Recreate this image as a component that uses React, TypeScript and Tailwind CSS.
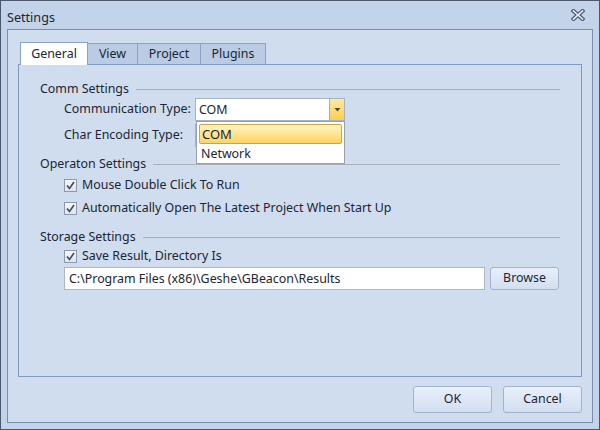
import React from "react";

const font = { fontFamily: '"Noto Sans", "Open Sans", sans-serif' };

function CloseGlyph() {
  return (
    <svg width="14" height="12" viewBox="0 0 14 12">
      <path d="M2.5 2 L11.5 10 M11.5 2 L2.5 10" stroke="#4f5b6e" strokeWidth="4" strokeLinecap="square" />
      <path d="M2.5 2 L11.5 10 M11.5 2 L2.5 10" stroke="#e9eef6" strokeWidth="1.6" strokeLinecap="square" />
    </svg>
  );
}

function Check() {
  return (
    <span className="w-[13px] h-[13px] border border-[#8e9aac] bg-gradient-to-b from-[#f4f6f9] to-[#dfe4ea] flex items-center justify-center shrink-0">
      <svg width="9" height="9" viewBox="0 0 9 9">
        <path d="M1 4.5 L3.5 7.5 L8 1" fill="none" stroke="#3b4a5e" strokeWidth="1.6" />
      </svg>
    </span>
  );
}

function GroupHeader({ title, className }: { title: string; className?: string }) {
  return (
    <div className={`flex items-center h-[18px] ${className ?? ""}`}>
      <span className="whitespace-nowrap">{title}</span>
      <span className="flex-1 h-px bg-[#a9afb8] ml-[7px]" />
    </div>
  );
}

function Combo({ value, open }: { value: string; open?: boolean }) {
  return (
    <div className="relative w-[150px] h-[23px] bg-white border border-[#a6b3c4] flex shrink-0">
      <span className="flex-1 pl-[3px] leading-[21px]">{value}</span>
      <span className="w-[15px] h-full bg-gradient-to-b from-[#ffe9a0] to-[#ffcf4a] border-l border-[#e0a634] flex items-center justify-center">
        <svg width="7" height="4" viewBox="0 0 7 4">
          <path d="M0.5 0 L6.5 0 L3.5 3.5 Z" fill="#4a4a4a" />
        </svg>
      </span>
      {open && (
        <div className="absolute left-0 top-[22px] w-[149px] h-[43px] bg-white border border-[#9aa0a8] z-10 p-px">
          <div className="h-[20px] mx-px mt-px rounded-[2px] border border-[#c9a24a] bg-gradient-to-b from-[#fff3c0] to-[#ffd55e] pl-[2px] leading-[18px] text-[13px]">
            COM
          </div>
          <div className="pl-[3px] leading-[20px]">Network</div>
        </div>
      )}
    </div>
  );
}

function Button({ label, className }: { label: string; className?: string }) {
  return (
    <button className={`rounded-[3px] border border-[#a2b4cc] bg-gradient-to-b from-[#e7effa] to-[#d3dff0] text-[#1b2533] ${className ?? ""}`}>
      {label}
    </button>
  );
}

export default function App() {
  const tabs = [
    { name: "View", w: "w-[50px]" },
    { name: "Project", w: "w-[63px]" },
    { name: "Plugins", w: "w-[65px]" },
  ];

  return (
    <div style={font} className="w-[600px] h-[430px] bg-[#c3d4ea] border border-[#4b586c] flex flex-col text-[12.4px] text-[#1b2533]">
      {/* Title bar */}
      <div className="h-[28px] flex items-center justify-between pl-[6px] pr-[14px]">
        <span className="text-[12.6px] mt-[6px]">Settings</span>
        <CloseGlyph />
      </div>

      {/* Body frame */}
      <div className="flex-1 mx-[6px] mb-[6px] border border-[#7890b0] bg-[#d0ddee] flex flex-col px-[10px]">
        {/* Tabs */}
        <div className="flex items-end pt-[12px] pl-[2px] h-[34px]">
          <div className="w-[68px] h-[23px] -mb-px bg-white border border-b-0 border-[#8aa3c2] flex items-center justify-center relative z-10">
            General
          </div>
          {tabs.map((t) => (
            <div
              key={t.name}
              className={`${t.w} h-[21px] bg-[#b9cce4] border border-l-0 border-b-0 border-[#8aa3c2] flex items-center justify-center`}
            >
              {t.name}
            </div>
          ))}
        </div>

        {/* Tab panel */}
        <div className="flex-1 border border-[#7f9bc0] pt-[15px] pl-[21px] pr-[21px]">
          <GroupHeader title="Comm Settings" />
          <div className="pl-[24px] flex flex-col gap-[3px]">
            <div className="flex items-center h-[23px] relative z-20">
              <span className="w-[131px] shrink-0 whitespace-nowrap">Communication Type:</span>
              <Combo value="COM" open />
            </div>
            <div className="flex items-center h-[23px]">
              <span className="w-[131px] shrink-0 whitespace-nowrap">Char Encoding Type:</span>
              <Combo value="" />
            </div>
          </div>

          <GroupHeader title="Operaton Settings" className="mt-[8px]" />
          <div className="pl-[24px] flex flex-col gap-[5px] mt-[3px]">
            <label className="flex items-center gap-[5px] h-[18px]">
              <Check />
              <span>Mouse Double Click To Run</span>
            </label>
            <label className="flex items-center gap-[5px] h-[18px]">
              <Check />
              <span>Automatically Open The Latest Project When Start Up</span>
            </label>
          </div>

          <GroupHeader title="Storage Settings" className="mt-[11px]" />
          <div className="pl-[24px] flex flex-col gap-[2px] mt-px">
            <label className="flex items-center gap-[5px] h-[18px]">
              <Check />
              <span>Save Result, Directory Is</span>
            </label>
            <div className="flex items-center gap-[5px]">
              <div className="w-[421px] h-[23px] bg-white border border-[#abb6c6] pl-[4px] leading-[21px] whitespace-nowrap">
                C:\Program Files (x86)\Geshe\GBeacon\Results
              </div>
              <Button label="Browse" className="w-[69px] h-[23px]" />
            </div>
          </div>
        </div>

        {/* Footer */}
        <div className="h-[45px] flex items-center justify-end gap-[11px]">
          <Button label="OK" className="w-[79px] h-[27px]" />
          <Button label="Cancel" className="w-[79px] h-[27px]" />
        </div>
      </div>
    </div>
  );
}
